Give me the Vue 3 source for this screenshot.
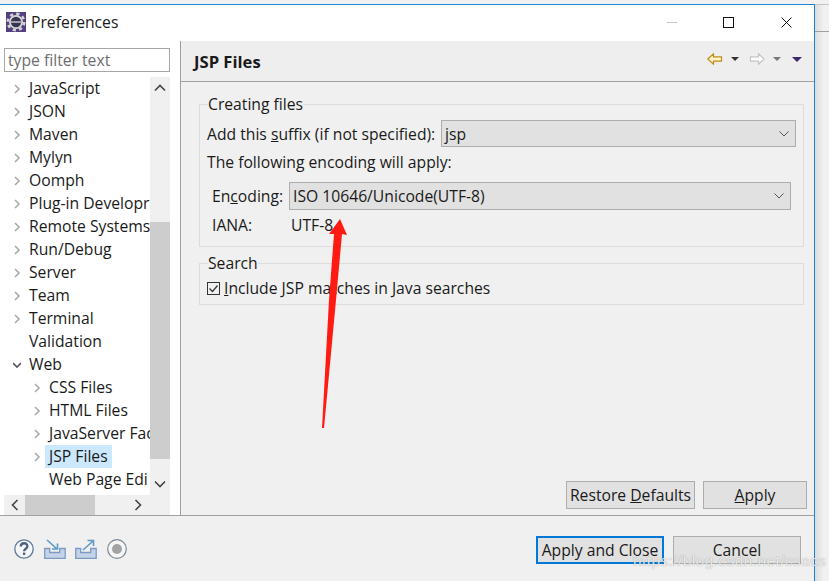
<template>
    <div class="screen">
        <div class="top-strip" />
        <div class="desk">
            <div class="window">
                <div class="titlebar">
                    <svg class="app-icon" width="20" height="20" viewBox="0 0 20 20">
                        <rect width="20" height="20" fill="#54407f" />
                        <circle cx="10" cy="10" r="8.200" fill="none" stroke="#d4d4d6" stroke-width="2.600" stroke-dasharray="3.200 3.240" />
                        <circle cx="10" cy="10" r="7" fill="#d6d6d8" />
                        <circle cx="10" cy="10" r="5.200" fill="#37354f" />
                        <rect x="4.800" y="9.200" width="10.400" height="1.600" fill="#b9b9c8" />
                    </svg>
                    <span class="title">Preferences</span>
                    <div class="win-buttons">
                        <span class="win-min" />
                        <span class="win-max" />
                        <svg width="11" height="11" viewBox="0 0 11 11" class="win-close">
                            <path d="M.5.5l10 10M10.500.5l-10 10" stroke="#111" stroke-width="1" fill="none" />
                        </svg>
                    </div>
                </div>

                <div class="body">
                    <aside class="sidebar">
                        <div class="filter">type filter text</div>
                        <div class="tree-wrap">
                            <ul class="tree">
                                <li
                                    v-for="item in treeItems"
                                    :key="item.label"
                                    :class="['tree-row', { child: item.child }]"
                                >
                                    <svg v-if="item.arrow" class="twisty" width="8" height="10" viewBox="0 0 8 10">
                                        <path
                                            :d="item.arrow === 'open' ? 'M0 3l4 4 4-4' : 'M2 1l4 4-4 4'"
                                            :stroke="item.arrow === 'open' ? '#555' : '#aaa'"
                                            stroke-width="1.600"
                                            fill="none"
                                        />
                                    </svg>
                                    <span v-else class="twisty" />
                                    <span :class="['tree-label', { selected: item.selected }]">{{ item.label }}</span>
                                </li>
                            </ul>
                            <div class="vscroll">
                                <svg width="12" height="8" viewBox="0 0 12 8">
                                    <path d="M1 6.500l5-5 5 5" stroke="#444" stroke-width="1.600" fill="none" />
                                </svg>
                                <div class="vtrack"><div class="vthumb" /></div>
                                <svg width="12" height="8" viewBox="0 0 12 8">
                                    <path d="M1 1.500l5 5 5-5" stroke="#444" stroke-width="1.600" fill="none" />
                                </svg>
                            </div>
                        </div>
                        <div class="hscroll">
                            <svg width="8" height="12" viewBox="0 0 8 12">
                                <path d="M6.500 1l-5 5 5 5" stroke="#444" stroke-width="1.600" fill="none" />
                            </svg>
                            <div class="hthumb" />
                            <svg width="8" height="12" viewBox="0 0 8 12">
                                <path d="M1.500 1l5 5-5 5" stroke="#444" stroke-width="1.600" fill="none" />
                            </svg>
                        </div>
                    </aside>

                    <main class="page">
                        <header class="page-head">
                            <h1>JSP Files</h1>
                            <div class="page-tools">
                                <svg width="16" height="12" viewBox="0 0 16 12">
                                    <path d="M.8 6L6.500.8v3h8v4.400h-8v3z" fill="#fff5c4" stroke="#c48a1e" stroke-width="1.200" />
                                </svg>
                                <span class="caret dark" />
                                <svg width="16" height="12" viewBox="0 0 16 12" class="fwd">
                                    <path d="M15.200 6L9.500.8v3h-8v4.400h8v3z" fill="#fff" stroke="#c4c4c4" stroke-width="1.200" />
                                </svg>
                                <span class="caret grey" />
                                <span class="caret purple" />
                            </div>
                        </header>

                        <div class="page-content">
                            <fieldset class="group creating">
                                <legend>Creating files</legend>
                                <div class="suffix-row">
                                    <span class="suffix-label">Add this <u>s</u>uffix (if not specified):</span>
                                    <div class="select">
                                        <span>jsp</span>
                                        <svg class="chevron" width="10" height="6" viewBox="0 0 10 6">
                                            <path d="M.5.5L5 5 9.500.5" stroke="#555" fill="none" />
                                        </svg>
                                    </div>
                                </div>
                                <p class="apply-note">The following encoding will apply:</p>
                                <div class="encoding-row">
                                    <span class="enc-label">En<u>c</u>oding:</span>
                                    <div class="select">
                                        <span>ISO 10646/Unicode(UTF-8)</span>
                                        <svg class="chevron" width="10" height="6" viewBox="0 0 10 6">
                                            <path d="M.5.5L5 5 9.500.5" stroke="#555" fill="none" />
                                        </svg>
                                    </div>
                                </div>
                                <div class="iana-row">
                                    <span class="iana-label">IANA:</span>
                                    <span>UTF-8</span>
                                </div>
                            </fieldset>

                            <fieldset class="group search">
                                <legend>Search</legend>
                                <label class="check-row">
                                    <svg width="13" height="13" viewBox="0 0 13 13">
                                        <rect x=".5" y=".5" width="12" height="12" fill="none" stroke="#333" />
                                        <path d="M2.500 6.500l3 3 5-6" stroke="#333" stroke-width="1.200" fill="none" />
                                    </svg>
                                    <span><u>I</u>nclude JSP matches in Java searches</span>
                                </label>
                            </fieldset>

                            <div class="page-actions">
                                <button class="btn restore">Restore <u>D</u>efaults</button>
                                <button class="btn apply"><u>A</u>pply</button>
                            </div>
                        </div>
                    </main>
                </div>

                <footer class="footer">
                    <div class="footer-icons">
                        <svg width="20" height="20" viewBox="0 0 20 20">
                            <circle cx="10" cy="10" r="9.200" fill="#f4f6fa" stroke="#5d7ba0" stroke-width="1.300" />
                            <path d="M6.800 7.600c0-4.400 6.600-4.400 6.600-.3 0 2.500-3.300 2.400-3.300 5" stroke="#4c5f7e" stroke-width="2.300" fill="none" />
                            <rect x="9" y="13.600" width="2.300" height="2.300" fill="#4c5f7e" />
                        </svg>
                        <svg width="22" height="20" viewBox="0 0 22 20" class="icon-import">
                            <path d="M.7 9.500h5v4h10v-4h5.500v9.800H.7z" fill="#c4d3e8" stroke="#7d9ac4" stroke-width="1.300" />
                            <path d="M3 1l10 9M13.500 4.500V10H8" stroke="#5c9bc4" stroke-width="1.600" fill="none" />
                        </svg>
                        <svg width="22" height="20" viewBox="0 0 22 20" class="icon-export">
                            <path d="M.7 9.500h5v4h10v-4h5.500v9.800H.7z" fill="#c4d3e8" stroke="#7d9ac4" stroke-width="1.300" />
                            <path d="M8 11l10-9M12.500 1.500H18.500V7" stroke="#5c9bc4" stroke-width="1.600" fill="none" />
                        </svg>
                        <svg width="20" height="20" viewBox="0 0 20 20" class="icon-record">
                            <circle cx="10" cy="10" r="9.300" fill="#f6f6f6" stroke="#7b8794" stroke-width="1.200" />
                            <circle cx="10" cy="10" r="5" fill="#a3a3a3" />
                        </svg>
                    </div>
                    <div class="footer-actions">
                        <button class="btn default">Apply and Close</button>
                        <button class="btn cancel">Cancel</button>
                    </div>
                </footer>
            </div>
            <div class="shadow-strip">
                <div class="shadow-line" />
            </div>
        </div>

        <!-- annotation drawn over the screenshot -->
        <svg class="red-arrow" width="40" height="220" viewBox="0 0 40 220">
            <path d="M20 9L27 25l-5-1-6 66L4 218H2L9 90l5-66-5 0z" fill="#ff1a12" />
        </svg>
        <span class="watermark">https://blog.csdn.net/csacs</span>
    </div>
</template>

<script setup>
    const treeItems = [
        { label: 'JavaScript', arrow: 'closed' },
        { label: 'JSON', arrow: 'closed' },
        { label: 'Maven', arrow: 'closed' },
        { label: 'Mylyn', arrow: 'closed' },
        { label: 'Oomph', arrow: 'closed' },
        { label: 'Plug-in Developr', arrow: 'closed' },
        { label: 'Remote Systems', arrow: 'closed' },
        { label: 'Run/Debug', arrow: 'closed' },
        { label: 'Server', arrow: 'closed' },
        { label: 'Team', arrow: 'closed' },
        { label: 'Terminal', arrow: 'closed' },
        { label: 'Validation' },
        { label: 'Web', arrow: 'open' },
        { label: 'CSS Files', arrow: 'closed', child: true },
        { label: 'HTML Files', arrow: 'closed', child: true },
        { label: 'JavaServer Fac', arrow: 'closed', child: true },
        { label: 'JSP Files', arrow: 'closed', child: true, selected: true },
        { label: 'Web Page Edi', child: true },
    ]
</script>

<style>
    body {
        overflow: hidden;
    }
</style>

<style scoped>
    .screen {
        position: relative;
        width: 829px;
        height: 581px;
        display: flex;
        flex-direction: column;
        overflow: hidden;
        background: #f0f0f0;
        color: #1a1a1a;
        font-family: "Open Sans", "Noto Sans", sans-serif;
        font-size: 15.7px;
        line-height: 20px;
    }

    .top-strip {
        height: 4px;
        background: #f1f1f1;
    }

    .desk {
        flex: 1;
        display: flex;
        min-height: 0;
    }

    .window {
        width: 815px;
        display: flex;
        flex-direction: column;
        border-top: 1px solid #1883d7;
        border-right: 1px solid #1883d7;
        box-sizing: border-box;
    }

    .shadow-strip {
        flex: 1;
        border-top: 1px solid #c4c4c4;
        background: linear-gradient(90deg, #dcdcdc, #f1f1f1 60%);
        padding-top: 26px;
    }

    .shadow-line {
        height: 1px;
        background: #a0a0a0;
    }

    /* Title bar */
    .titlebar {
        height: 36px;
        flex: none;
        box-sizing: border-box;
        padding: 0 0 2px 6px;
        display: flex;
        align-items: center;
        background: #fff;
    }

    .title {
        margin-left: 5px;
    }

    .win-buttons {
        margin-left: auto;
        display: flex;
        align-items: center;
    }

    .win-min {
        width: 10px;
        height: 1px;
        background: #c4c4c4;
        margin-right: 46px;
    }

    .win-max {
        width: 11px;
        height: 11px;
        box-sizing: border-box;
        border: 1px solid #111;
        margin-right: 47px;
    }

    .win-close {
        margin-right: 22px;
    }

    /* Left tree */
    .body {
        flex: 1;
        min-height: 0;
        display: flex;
    }

    .sidebar {
        width: 180px;
        flex: none;
        box-sizing: border-box;
        padding: 7px 10px 0 4px;
        background: #fff;
        display: flex;
        flex-direction: column;
    }

    .filter {
        height: 24px;
        box-sizing: border-box;
        border: 1px solid #a6a6a6;
        padding-left: 3px;
        line-height: 22px;
        color: #6d6d6d;
    }

    .tree-wrap {
        margin-top: 5px;
        height: 418px;
        display: flex;
    }

    .tree {
        width: 146px;
        margin: 0;
        padding: 0;
        list-style: none;
        overflow: hidden;
    }

    .tree-row {
        height: 23px;
        display: flex;
        align-items: center;
        white-space: nowrap;
        padding-left: 9px;
    }

    .tree-row.child {
        padding-left: 29px;
    }

    .twisty {
        width: 8px;
        flex: none;
    }

    .tree-label {
        margin-left: 4px;
        padding: 0 4px;
        height: 23px;
        line-height: 23px;
    }

    .tree-label.selected {
        background: #cce8ff;
    }

    .vscroll {
        width: 20px;
        background: #f0f0f0;
        display: flex;
        flex-direction: column;
        align-items: center;
        padding: 7px 0;
        box-sizing: border-box;
    }

    .vtrack {
        flex: 1;
        width: 100%;
        padding-top: 130px;
        padding-bottom: 21px;
        box-sizing: border-box;
    }

    .vthumb {
        height: 100%;
        background: #cdcdcd;
    }

    .hscroll {
        height: 20px;
        display: flex;
        align-items: center;
        background: #f0f0f0;
        padding-left: 7px;
    }

    .hthumb {
        width: 70px;
        height: 100%;
        background: #cdcdcd;
        margin-left: 6px;
        margin-right: 39px;
    }

    /* Right page */
    .page {
        flex: 1;
        min-width: 0;
        border-left: 1px solid #a0a0a0;
        display: flex;
        flex-direction: column;
    }

    .page-head {
        height: 41px;
        flex: none;
        box-sizing: border-box;
        border-bottom: 1px solid #a0a0a0;
        background: #eeeeee;
        display: flex;
        align-items: center;
        padding: 2px 12px 0 13px;
    }

    .page-head h1 {
        margin: 0;
        font-size: 16.6px;
        font-weight: 700;
    }

    .page-tools {
        margin-left: auto;
        display: flex;
        align-items: center;
        margin-top: -6px;
    }

    .caret {
        width: 0;
        height: 0;
        margin-left: 8px;
        border-left: 4px solid transparent;
        border-right: 4px solid transparent;
        border-top: 4px solid #333;
    }

    .caret.grey {
        border-top-color: #777;
    }

    .caret.purple {
        border-left-width: 5px;
        border-right-width: 5px;
        border-top: 5px solid #3a2a66;
        margin-left: 11px;
    }

    .fwd {
        margin-left: 10px;
    }

    .page-content {
        flex: 1;
        min-height: 0;
        padding: 12px 10px 0 18px;
        display: flex;
        flex-direction: column;
    }

    .group {
        margin: 0;
        padding: 0 7px;
        border: 1px solid #dcdcdc;
        min-width: 0;
    }

    .group legend {
        padding: 0;
        margin-left: 1px;
        height: 20px;
    }

    .creating {
        height: 153px;
        box-sizing: border-box;
    }

    .suffix-row {
        display: flex;
        align-items: center;
        height: 27px;
        margin-top: 6px;
    }

    .suffix-label {
        width: 234px;
        flex: none;
        white-space: nowrap;
    }

    .select {
        flex: 1;
        height: 100%;
        box-sizing: border-box;
        border: 1px solid #adadad;
        background: #e1e1e1;
        display: flex;
        align-items: center;
        justify-content: space-between;
        padding: 0 6px 0 3px;
    }

    .apply-note {
        margin: 5px 0 0;
        height: 20px;
    }

    .encoding-row {
        display: flex;
        align-items: center;
        height: 28px;
        margin: 10px 5px 0 5px;
    }

    .enc-label {
        width: 77px;
        flex: none;
    }

    .iana-row {
        display: flex;
        margin: 5px 0 0 5px;
    }

    .iana-label {
        width: 79px;
    }

    .search {
        height: 52px;
        box-sizing: border-box;
        margin-top: 6px;
    }

    .check-row {
        display: flex;
        align-items: center;
        gap: 4px;
        margin-top: 5px;
    }

    .page-actions {
        margin-top: auto;
        margin-bottom: 6px;
        display: flex;
        gap: 8px;
        justify-content: flex-end;
        margin-right: -3px;
    }

    .btn {
        height: 28px;
        padding: 0;
        box-sizing: border-box;
        border: 1px solid #adadad;
        background: #e1e1e1;
        color: #1a1a1a;
        font: inherit;
    }

    .restore {
        width: 129px;
    }

    .apply {
        width: 104px;
    }

    /* Footer */
    .footer {
        height: 66px;
        flex: none;
        box-sizing: border-box;
        border-top: 1px solid #a0a0a0;
        display: flex;
        align-items: flex-start;
        justify-content: space-between;
        padding: 20px 13px 0 14px;
    }

    .footer-icons {
        display: flex;
        align-items: center;
        margin-top: 3px;
    }

    .icon-import,
    .icon-record {
        margin-left: 10px;
    }

    .icon-export {
        margin-left: 9px;
    }

    .footer-actions {
        display: flex;
        gap: 9px;
    }

    .default {
        width: 128px;
        border: 2px solid #0078d7;
    }

    .cancel {
        width: 128px;
    }

    /* Overlays */
    .red-arrow {
        position: absolute;
        left: 320px;
        top: 210px;
    }

    .watermark {
        position: absolute;
        left: 633px;
        top: 551px;
        font-family: "Liberation Sans", sans-serif;
        font-size: 15.5px;
        letter-spacing: .4px;
        color: rgba(255, 255, 255, .8);
        text-shadow: 0 0 1px rgba(90, 90, 90, .65);
    }
</style>
